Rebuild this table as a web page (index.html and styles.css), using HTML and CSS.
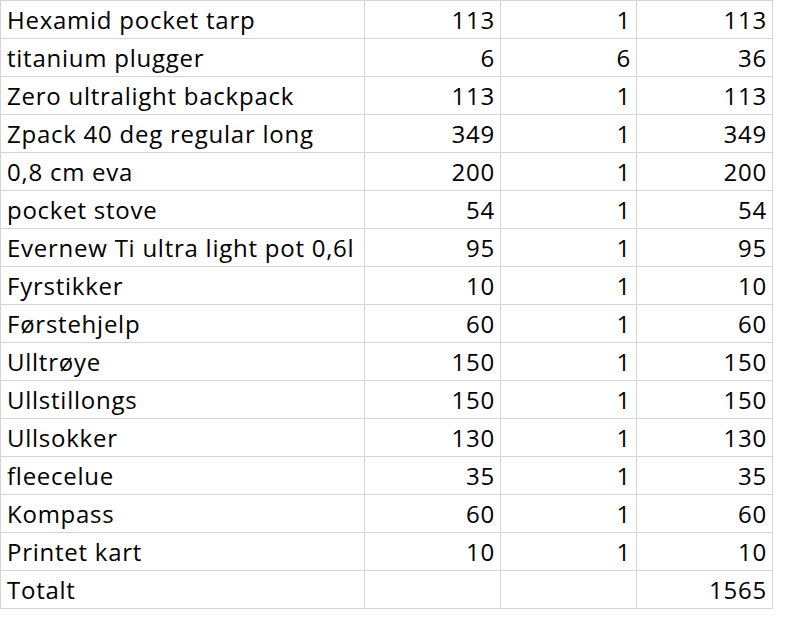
FILE: index.html
```html
<!DOCTYPE html>
<html>
<head>
<meta charset="utf-8">
<link rel="stylesheet" href="styles.css">
</head>
<body>
<div class="sheet">
  <div class="c t">Hexamid pocket tarp</div><div class="c n">113</div><div class="c n">1</div><div class="c n">113</div>
  <div class="c t">titanium plugger</div><div class="c n">6</div><div class="c n">6</div><div class="c n">36</div>
  <div class="c t">Zero ultralight backpack</div><div class="c n">113</div><div class="c n">1</div><div class="c n">113</div>
  <div class="c t">Zpack 40 deg regular long</div><div class="c n">349</div><div class="c n">1</div><div class="c n">349</div>
  <div class="c t">0,8 cm eva</div><div class="c n">200</div><div class="c n">1</div><div class="c n">200</div>
  <div class="c t">pocket stove</div><div class="c n">54</div><div class="c n">1</div><div class="c n">54</div>
  <div class="c t">Evernew Ti ultra light pot 0,6l</div><div class="c n">95</div><div class="c n">1</div><div class="c n">95</div>
  <div class="c t">Fyrstikker</div><div class="c n">10</div><div class="c n">1</div><div class="c n">10</div>
  <div class="c t">Førstehjelp</div><div class="c n">60</div><div class="c n">1</div><div class="c n">60</div>
  <div class="c t">Ulltrøye</div><div class="c n">150</div><div class="c n">1</div><div class="c n">150</div>
  <div class="c t">Ullstillongs</div><div class="c n">150</div><div class="c n">1</div><div class="c n">150</div>
  <div class="c t">Ullsokker</div><div class="c n">130</div><div class="c n">1</div><div class="c n">130</div>
  <div class="c t">fleecelue</div><div class="c n">35</div><div class="c n">1</div><div class="c n">35</div>
  <div class="c t">Kompass</div><div class="c n">60</div><div class="c n">1</div><div class="c n">60</div>
  <div class="c t">Printet kart</div><div class="c n">10</div><div class="c n">1</div><div class="c n">10</div>
  <div class="c t">Totalt</div><div class="c n"></div><div class="c n"></div><div class="c n">1565</div>
</div>
</body>
</html>
```
FILE: styles.css
```css
html, body {
  margin: 0;
  padding: 0;
  background: #ffffff;
}
.sheet {
  display: grid;
  grid-template-columns: 363px 135px 135px 135px;
  grid-auto-rows: 37px;
  gap: 1px;
  padding: 1px;
  background: #d4d4d4;
  width: 773px;
  box-sizing: border-box;
  font-family: "Open Sans", "Noto Sans", sans-serif;
  font-size: 24px;
  letter-spacing: 0.75px;
  color: #000;
}
.c {
  background: #fff;
  white-space: nowrap;
  overflow: hidden;
  line-height: 37px;
}
.t {
  padding-left: 6px;
  text-align: left;
}
.n {
  text-align: right;
  padding-right: 5px;
}
```
